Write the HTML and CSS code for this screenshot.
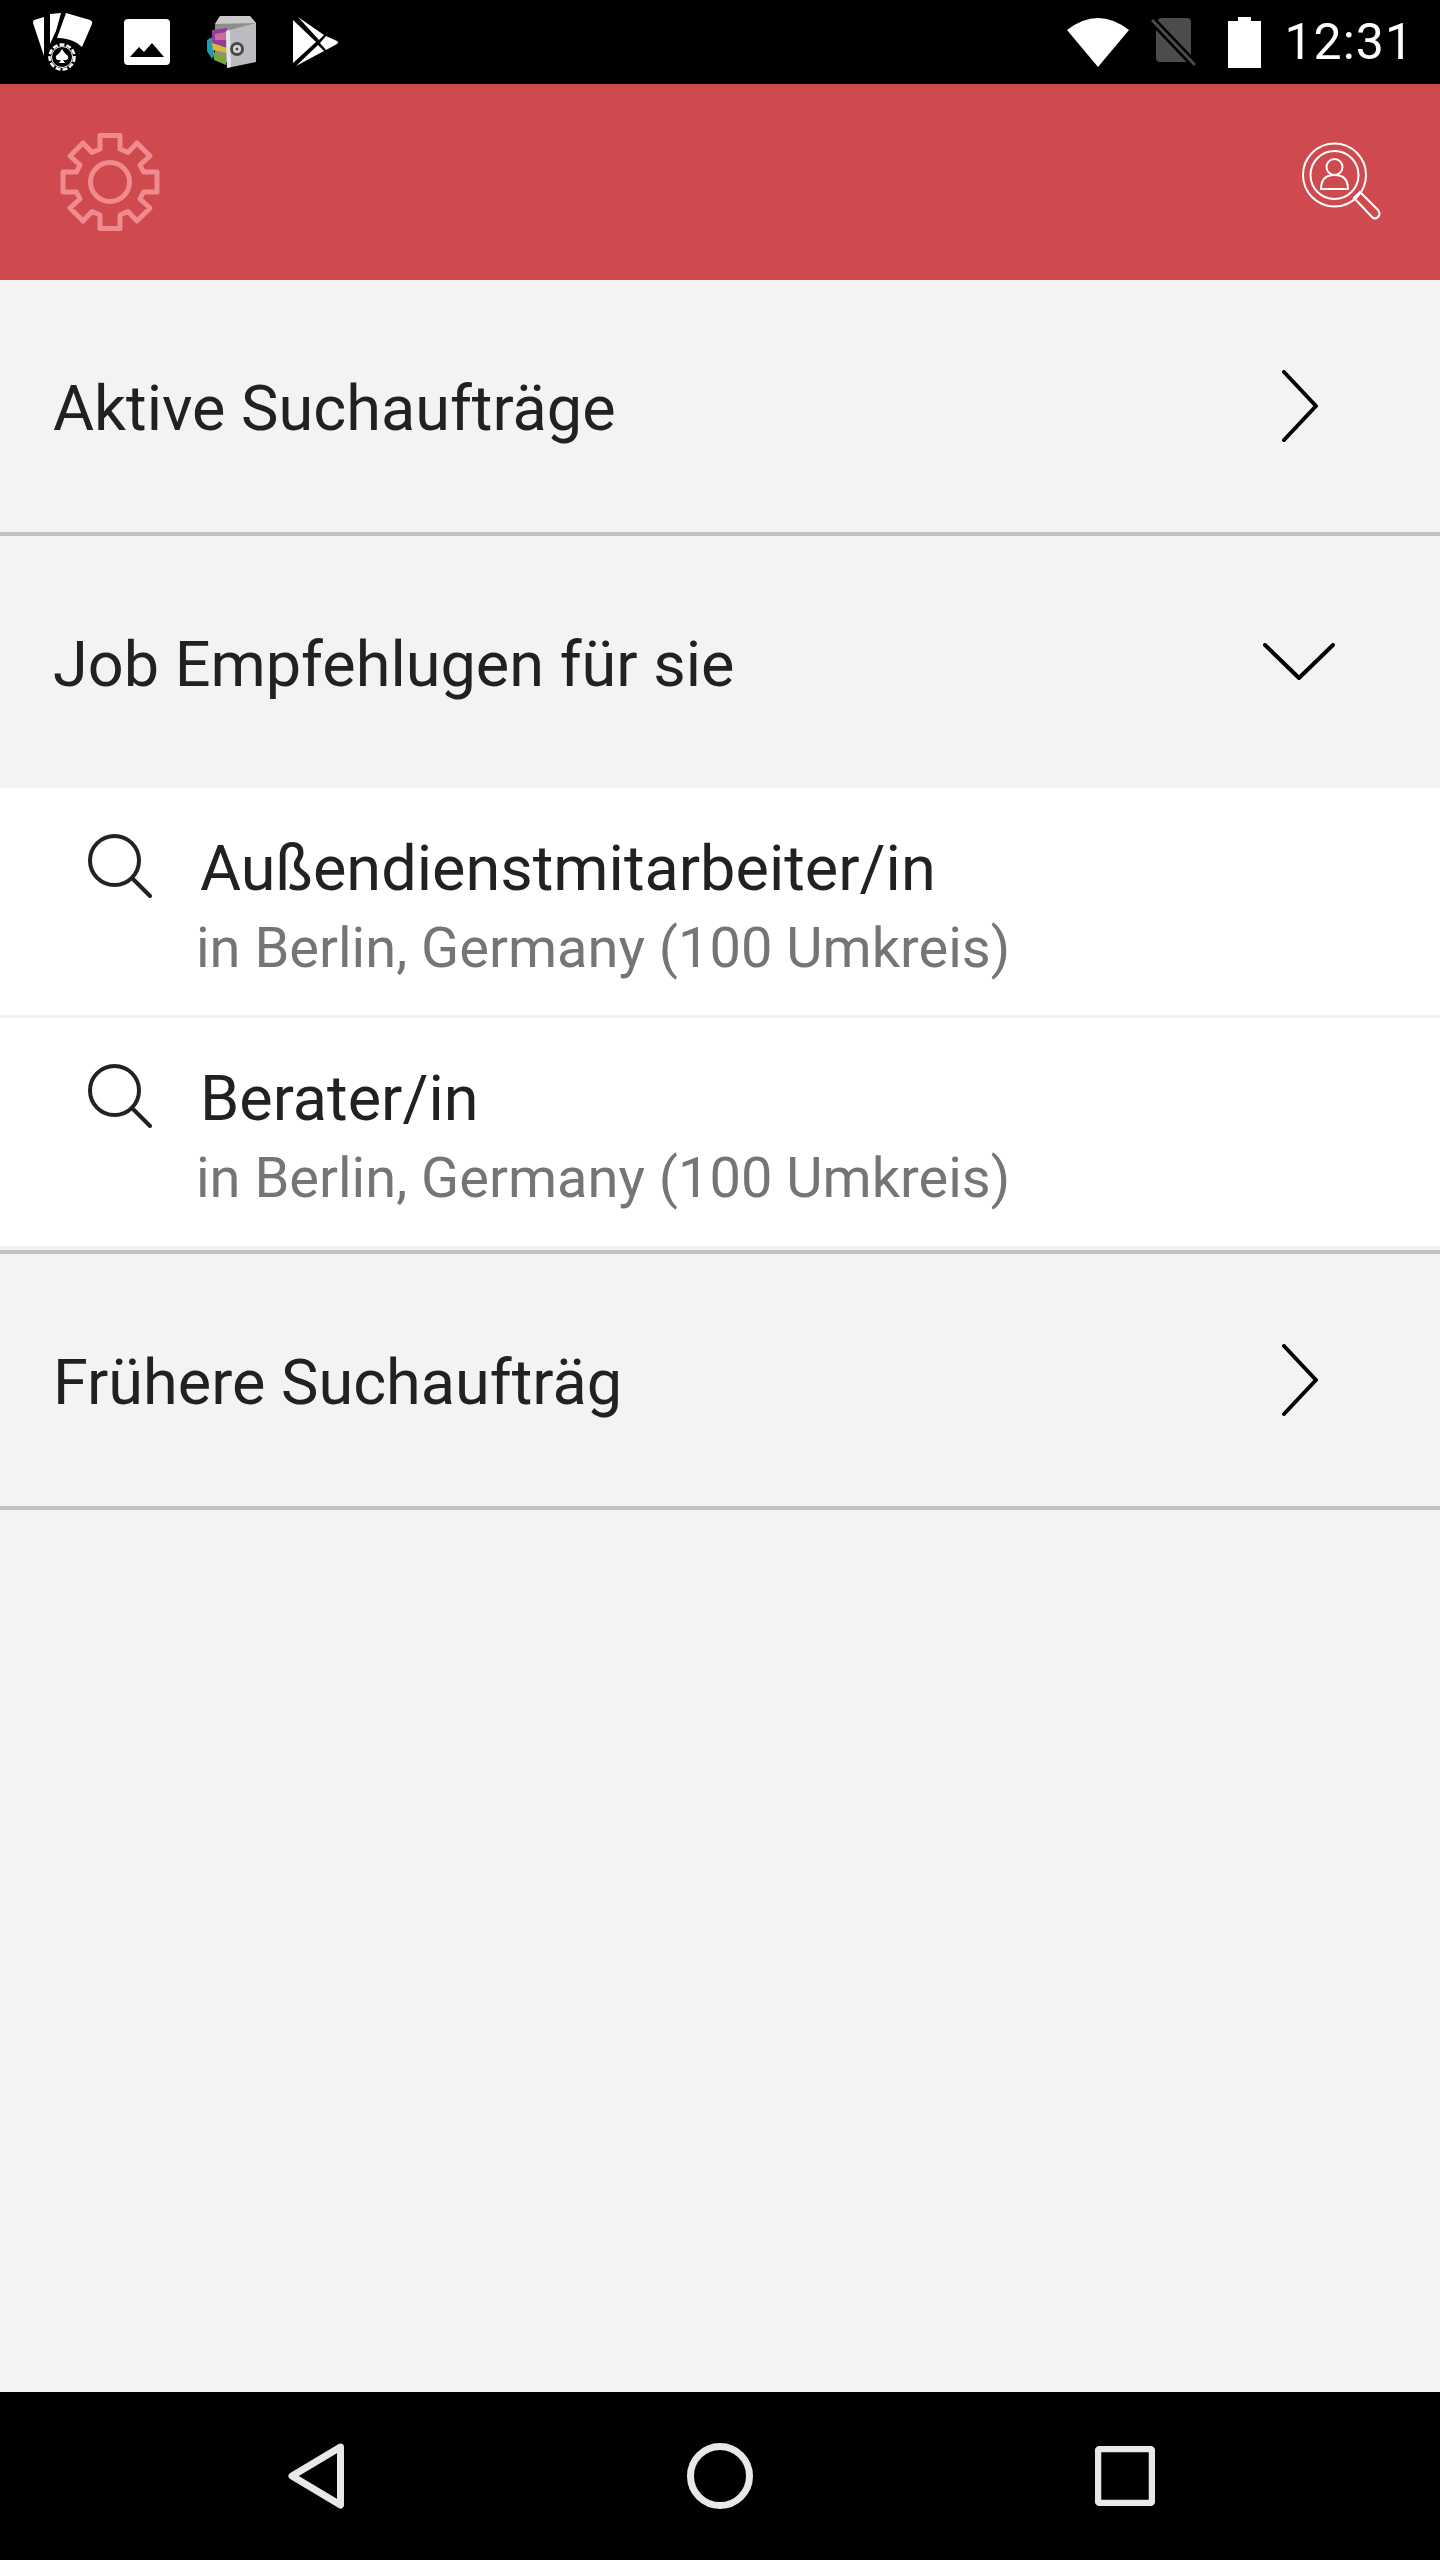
FILE: index.html
```html
<!DOCTYPE html>
<html lang="de">
<head>
<meta charset="utf-8">
<title>Suchaufträge</title>
<link rel="stylesheet" href="styles.css">
</head>
<body>
<div class="app">
  <div class="status">
    <div class="status-left">
      <svg class="ic-cards" viewBox="0 0 60 58"><path d="M1 7 11 4 11 43 0 10Q0 8 1 7Z" fill="#fff"/><path d="M17 1 28 0 23 18 17 31Z" fill="#fff"/><path d="M33 0 57 7Q60 8 59 11L49 34 44 30Q35 25 24 25Z" fill="#fff"/><circle cx="29" cy="44" r="14" fill="#000"/><circle cx="29" cy="44" r="12.500" fill="none" stroke="#fff" stroke-width="2.500" stroke-dasharray="5 2"/><circle cx="29" cy="44" r="10.500" fill="none" stroke="#fff" stroke-width="1"/><path d="M29 36Q31 40 35 43Q36 48 30 47L32 50H26L28 47Q22 48 23 43Q27 40 29 36Z" fill="#fff"/></svg>
      <svg class="ic-image" viewBox="0 0 46 46"><path d="M4 0H42Q46 0 46 4V42Q46 46 42 46H4Q0 46 0 42V4Q0 0 4 0Z" fill="#fff"/><path d="M6 38 15 28 20 33 28 24 40 38Z" fill="#000"/></svg>
      <svg class="ic-safe" viewBox="0 0 50 53"><path d="M9 8 14 0H44L50 7 49 46H20L9 40Z" fill="#8d8d8d"/><path d="M9 8 14 0H44L50 7Z" fill="#c9c9c9"/><path d="M1 24 8 20 8 38 6 43 1 35Z" fill="#1f9cb4"/><path d="M6 14 21 12V32L6 27Z" fill="#8d3f94"/><path d="M9 18 20 16V24L9 24Z" fill="#d06a9c"/><path d="M6 27 21 32V37L7 34Z" fill="#d9b93a"/><path d="M7 36 20 40V49L8 44Z" fill="#78a83a"/><path d="M20 15 50 7V46L21 52Z" fill="#bcbcc0"/><path d="M20 15 24 14 25 51 21 52Z" fill="#e4e4e4"/><circle cx="31" cy="33" r="7" fill="#4a4a4a"/><circle cx="31" cy="33" r="4" fill="#d8d8d8"/><circle cx="31" cy="33" r="1.500" fill="#4a4a4a"/></svg>
      <svg class="ic-play" viewBox="0 0 46 50"><path d="M0 3 23 25 0 46Z" fill="#fff"/><path d="M5 0 31 18 26 23Z" fill="#fff"/><path d="M33 19 44 24Q46 25 44 27L33 33 27 26Z" fill="#fff"/><path d="M25 28 31 34 3 49Z" fill="#fff"/></svg>
    </div>
    <div class="status-right">
      <svg class="ic-wifi" viewBox="0 0 62 49"><path d="M0 12Q31-12 62 12L31 49Z" fill="#fff"/></svg>
      <svg class="ic-sim" viewBox="0 0 45 48"><path d="M9 0H36Q40 0 40 4V44H9Q5 44 5 40V4Z" fill="#4c4c4c"/><path d="M0 1 44 47" stroke="#000" stroke-width="8"/><path d="M1 2 44 47" stroke="#4c4c4c" stroke-width="3"/></svg>
      <svg class="ic-batt" viewBox="0 0 33 51"><path d="M10 0H23V4H33V51H0V4H10Z" fill="#fff"/></svg>
      <span class="clock">12:31</span>
    </div>
  </div>
  <header class="bar">
    <svg class="ic-gear" viewBox="0 0 100 100"><path d="M40 3.500H60V17L68 20.500 77 11 90 24 80 33 83.500 40H97V60H83.500L80 67 90 76 77 89 68 79.500 60 83V96.500H40V83L32 79.500 23 89 10 76 20 67 16.500 60H3V40H16.500L20 33 10 24 23 11 32 20.500 40 17Z" fill="none" stroke="#f08a8e" stroke-width="5" stroke-linejoin="round"/><circle cx="50" cy="50" r="19.500" fill="none" stroke="#f08a8e" stroke-width="5"/></svg>
    <svg class="ic-person" viewBox="0 0 80 80"><g fill="none" stroke="#fff" stroke-width="2"><circle cx="32.500" cy="33" r="31.500"/><circle cx="32.500" cy="33" r="24"/><circle cx="32.500" cy="25" r="8"/><path d="M19 47Q19 33 32.500 33T46 47Z"/><path d="M52 56 58 50 76 68Q79 72 76 75 73 78 70 75Z"/></g></svg>
  </header>
  <main class="list">
    <section class="row row-ruled">
      <span class="row-title">Aktive Suchaufträge</span>
      <svg class="ic-right" viewBox="0 0 36 72"><path d="M2 2 34 36 2 70" fill="none" stroke="#000" stroke-width="4" stroke-linecap="round" stroke-linejoin="round"/></svg>
    </section>
    <section class="row">
      <span class="row-title">Job Empfehlugen für sie</span>
      <svg class="ic-down" viewBox="0 0 72 38"><path d="M2 2 36 35 70 2" fill="none" stroke="#000" stroke-width="4" stroke-linecap="round" stroke-linejoin="round"/></svg>
    </section>
    <div class="jobs">
      <article class="job">
        <svg class="ic-search" viewBox="0 0 64 64"><circle cx="26.500" cy="26.500" r="24.500" fill="none" stroke="#222" stroke-width="4"/><path d="M44 44 62 62" stroke="#222" stroke-width="4" stroke-linecap="round"/></svg>
        <div class="job-text">
          <div class="job-title">Außendienstmitarbeiter/in</div>
          <div class="job-sub">in Berlin, Germany (100 Umkreis)</div>
        </div>
      </article>
      <article class="job job-last">
        <svg class="ic-search" viewBox="0 0 64 64"><circle cx="26.500" cy="26.500" r="24.500" fill="none" stroke="#222" stroke-width="4"/><path d="M44 44 62 62" stroke="#222" stroke-width="4" stroke-linecap="round"/></svg>
        <div class="job-text">
          <div class="job-title">Berater/in</div>
          <div class="job-sub">in Berlin, Germany (100 Umkreis)</div>
        </div>
      </article>
    </div>
    <section class="row row-ruled">
      <span class="row-title">Frühere Suchaufträg</span>
      <svg class="ic-right" viewBox="0 0 36 72"><path d="M2 2 34 36 2 70" fill="none" stroke="#000" stroke-width="4" stroke-linecap="round" stroke-linejoin="round"/></svg>
    </section>
  </main>
  <nav class="nav">
    <svg class="ic-back" viewBox="0 0 56 66"><path d="M52.500 4 4 33 52.500 62Z" fill="none" stroke="#e8e8e8" stroke-width="7" stroke-linejoin="round"/></svg>
    <svg class="ic-home" viewBox="0 0 66 66"><circle cx="33" cy="33" r="29.500" fill="none" stroke="#e8e8e8" stroke-width="7"/></svg>
    <svg class="ic-recent" viewBox="0 0 60 60"><rect x="3" y="3" width="54" height="54" rx="2" fill="none" stroke="#e8e8e8" stroke-width="6.500"/></svg>
  </nav>
</div>
</body>
</html>
```
FILE: styles.css
```css
* { box-sizing: border-box; }
html, body { margin: 0; padding: 0; }
body { background: #f3f3f3; font-family: Roboto, sans-serif; }
svg { display: block; flex: none; }
.app { width: 1440px; height: 2560px; display: flex; flex-direction: column; }

.status { height: 84px; background: #000; display: flex; justify-content: space-between; align-items: center; padding: 0 26px 0 33px; }
.status-left { display: flex; align-items: center; }
.status-right { display: flex; align-items: center; }
.ic-cards { width: 60px; height: 58px; margin-right: 31px; }
.ic-image { width: 46px; height: 46px; margin-right: 36px; }
.ic-safe { width: 50px; height: 53px; margin-right: 37px; }
.ic-play { width: 46px; height: 50px; }
.ic-wifi { width: 62px; height: 49px; margin-right: 22px; }
.ic-sim { width: 45px; height: 48px; margin-right: 32px; }
.ic-batt { width: 33px; height: 51px; margin-right: 23px; }
.clock { font-size: 50px; color: #fff; line-height: 50px; letter-spacing: 1px; }

.bar { height: 196px; background: #cf4a4f; display: flex; justify-content: space-between; align-items: center; padding: 0 58px 0 60px; }
.ic-gear { width: 100px; height: 100px; }
.ic-person { width: 80px; height: 80px; }

.list { flex: 1; }
.row { height: 252px; display: flex; justify-content: space-between; align-items: center; padding: 0 100px 0 53px; }
.row-ruled { height: 256px; border-bottom: 4px solid #c2c2c2; }
.row-title { font-size: 63px; color: #212121; padding-top: 4px; }
.ic-right { width: 36px; height: 72px; margin-right: 22px; }
.ic-down { width: 72px; height: 38px; margin-right: 5px; }

.jobs { background: #fff; border-bottom: 4px solid #c2c2c2; }
.job { height: 230px; display: flex; padding: 43px 0 0 88px; border-bottom: 3px solid #f1f1f1; }
.job-last { height: 232px; border-bottom-width: 4px; }
.ic-search { width: 64px; height: 64px; margin-top: 3px; }
.job-text { margin-left: 44px; }
.job-title { font-size: 63px; color: #212121; line-height: 76px; margin-left: 4px; }
.job-sub { font-size: 56px; color: #757575; line-height: 82px; }

.nav { height: 168px; background: #000; display: flex; justify-content: space-between; align-items: center; padding: 0 285px 0 288px; }
.ic-back { width: 56px; height: 66px; }
.ic-home { width: 66px; height: 66px; }
.ic-recent { width: 60px; height: 60px; }
```
